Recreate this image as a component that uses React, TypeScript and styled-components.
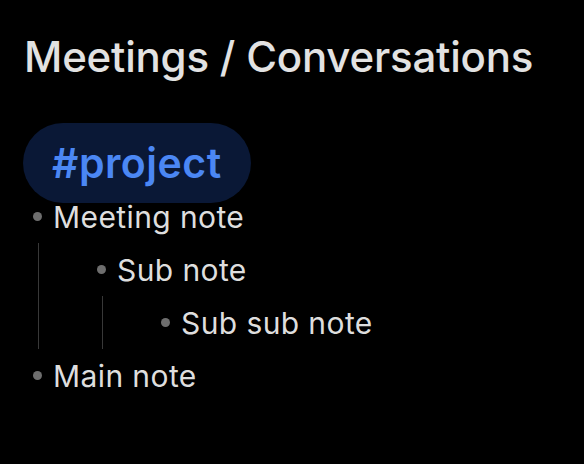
import React from "react";
import styled, { createGlobalStyle } from "styled-components";

const GlobalStyle = createGlobalStyle`
  html, body {
    margin: 0;
    padding: 0;
    background: #000000;
  }
  body {
    font-family: Inter, "Noto Sans", "Liberation Sans", sans-serif;
    -webkit-font-smoothing: antialiased;
  }
`;

const Page = styled.div`
  box-sizing: border-box;
  width: 584px;
  height: 464px;
  padding: 30px 24px 0 24px;
  background: #000000;
  overflow: hidden;
`;

const Title = styled.h1`
  margin: 0;
  font-size: 42px;
  line-height: 53px;
  font-weight: 500;
  letter-spacing: -0.2px;
  color: #e2e2e2;
  white-space: nowrap;
`;

const TagLine = styled.p`
  margin: 54px 0 0 0;
  font-size: 41px;
  line-height: 53px;
`;

const Tag = styled.span`
  display: inline;
  padding: 15px 29px;
  margin-left: -1px;
  border-radius: 40px;
  background: #0a1836;
  color: #4b87f4;
  font-weight: 600;
  letter-spacing: 0.5px;
`;

const List = styled.ul`
  list-style: none;
  margin: 0;
  padding: 0;
`;

const Children = styled.ul`
  list-style: none;
  margin: 0 0 0 14px;
  padding: 0 0 0 49px;
  border-left: 1px solid #383838;
`;

const Row = styled.div`
  display: flex;
  align-items: center;
  height: 53px;
`;

const Marker = styled.span`
  flex: 0 0 29px;
  display: flex;
  align-items: center;
`;

const Dot = styled.span`
  width: 9px;
  height: 9px;
  margin-left: 9px;
  border-radius: 50%;
  background: #6e6e6e;
`;

const Label = styled.span`
  font-size: 30px;
  letter-spacing: 0.4px;
  color: #dedede;
  white-space: nowrap;
`;

type Note = { text: string; children?: Note[] };

const notes: Note[] = [
  {
    text: "Meeting note",
    children: [{ text: "Sub note", children: [{ text: "Sub sub note" }] }],
  },
  { text: "Main note" },
];

const NoteItem: React.FC<{ note: Note }> = ({ note }) => (
  <li>
    <Row>
      <Marker>
        <Dot />
      </Marker>
      <Label>{note.text}</Label>
    </Row>
    {note.children && (
      <Children>
        {note.children.map((child) => (
          <NoteItem key={child.text} note={child} />
        ))}
      </Children>
    )}
  </li>
);

export default function App() {
  return (
    <>
      <GlobalStyle />
      <Page>
        <Title>Meetings / Conversations</Title>
        <TagLine>
          <Tag>#project</Tag>
        </TagLine>
        <List>
          {notes.map((note) => (
            <NoteItem key={note.text} note={note} />
          ))}
        </List>
      </Page>
    </>
  );
}
